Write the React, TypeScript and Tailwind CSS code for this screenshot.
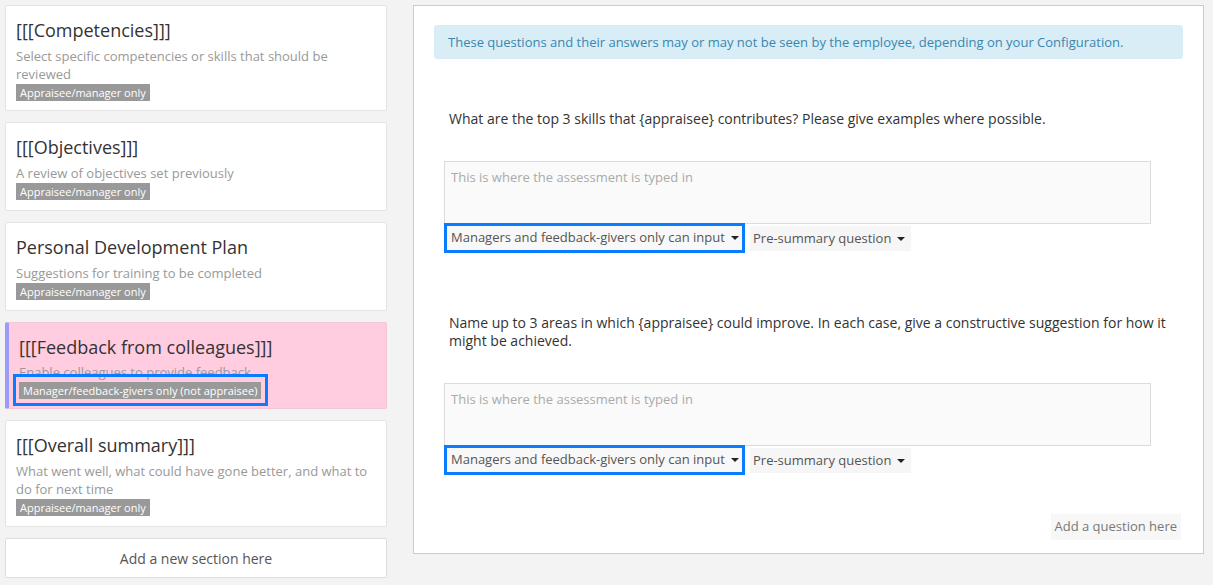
const sections = [
  {
    title: "[[[Competencies]]]",
    desc: "Select specific competencies or skills that should be reviewed",
    badge: "Appraisee/manager only",
    tight: true,
  },
  {
    title: "[[[Objectives]]]",
    desc: "A review of objectives set previously",
    badge: "Appraisee/manager only",
  },
  {
    title: "Personal Development Plan",
    desc: "Suggestions for training to be completed",
    badge: "Appraisee/manager only",
  },
  {
    title: "[[[Feedback from colleagues]]]",
    desc: "Enable colleagues to provide feedback",
    badge: "Manager/feedback-givers only (not appraisee)",
    active: true,
  },
  {
    title: "[[[Overall summary]]]",
    desc: "What went well, what could have gone better, and what to do for next time",
    badge: "Appraisee/manager only",
  },
];

const questions = [
  "What are the top 3 skills that {appraisee} contributes? Please give examples where possible.",
  "Name up to 3 areas in which {appraisee} could improve. In each case, give a constructive suggestion for how it might be achieved.",
];

function Caret() {
  return <span className="ml-[6px] inline-block h-0 w-0 border-x-[4px] border-t-[4px] border-x-transparent border-t-[#222]" />;
}

function SectionCard({ s }: { s: (typeof sections)[number] }) {
  return (
    <div
      className={
        s.active
          ? "rounded-[2px] border border-[#f5c6d9] border-l-[4px] border-l-[#9c9cf8] bg-[#ffcce0] pt-[9px] pb-[9px] pl-[10px] pr-[10px]"
          : s.tight
            ? "rounded-[2px] border border-[#e4e4e4] bg-white pt-[9px] pb-[9px] pl-[10px] pr-[10px]"
            : "rounded-[2px] border border-[#e4e4e4] bg-white pt-[9px] pb-[10px] pl-[10px] pr-[10px]"
      }
    >
      <div
        className={
          s.active
            ? "mt-[3px] mb-[4px] text-[18px] leading-[24px] text-[#333]"
            : "mt-[3px] mb-[5px] text-[18px] leading-[24px] text-[#333]"
        }
      >
        {s.title}
      </div>
      <div className="text-[13px] leading-[18px] text-[#999]">{s.desc}</div>
      <div className="mt-[1px] flex">
        <span className="relative bg-[#999] px-[4px] text-[11px] leading-[17px] text-white">
          {s.badge}
          {s.active && (
            <span className="absolute -top-[8px] -right-[7px] -bottom-[7px] -left-[6px] border-[3px] border-[#0a7cff]" />
          )}
        </span>
      </div>
    </div>
  );
}

function Question({ text, first }: { text: string; first?: boolean }) {
  return (
    <div className={first ? "mt-[51px]" : "mt-[63px]"}>
      <p className="pl-[15px] pr-[10px] text-[14px] leading-[18px] text-[#333]">{text}</p>
      <div className="mt-[33px] ml-[10px] h-[63px] w-[707px] border border-[#dcdcdc] bg-[#fafafa] px-[6px] py-[6px] text-[13px] leading-[18px] text-[#aaa]">
        This is where the assessment is typed in
      </div>
      <div className="mt-[2px] ml-[13px] flex items-start gap-[8px] text-[13px] text-[#555]">
        <div className="flex h-[24px] w-[295px] items-center bg-[#f8f8f8] pl-[4px] outline-3 outline-[#0a7cff]">
          Managers and feedback-givers only can input
          <Caret />
        </div>
        <div className="flex h-[25px] items-center bg-[#f6f6f6] pl-[3px] pr-[6px]">
          Pre-summary question
          <Caret />
        </div>
      </div>
    </div>
  );
}

export default function App() {
  return (
    <div className="flex h-[585px] w-[1213px] items-start bg-[#f3f3f3] font-['Open_Sans',sans-serif]">
      <div className="mt-[5px] ml-[5px] flex w-[382px] flex-col gap-[11px]">
        {sections.map((s) => (
          <SectionCard key={s.title} s={s} />
        ))}
        <div className="flex h-[40px] items-center justify-center rounded-[2px] border border-[#dcdde3] bg-white text-[14px] text-[#555]">
          Add a new section here
        </div>
      </div>

      <div className="mt-[5px] ml-[26px] flex h-[549px] w-[791px] flex-col border border-[#cbcbcb] bg-white px-[20px] pt-[19px]">
        <div className="h-[34px] rounded-[3px] bg-[#d9edf7] px-[14px] text-[13px] leading-[34px] text-[#3a87ad]">
          These questions and their answers may or may not be seen by the employee, depending on your Configuration.
        </div>
        {questions.map((q, i) => (
          <Question key={i} text={q} first={i === 0} />
        ))}
        <div className="mt-[41px] mr-[2px] flex justify-end">
          <div className="flex h-[26px] items-center bg-[#f7f7f7] px-[4px] text-[13px] text-[#777]">
            Add a question here
          </div>
        </div>
      </div>
    </div>
  );
}
